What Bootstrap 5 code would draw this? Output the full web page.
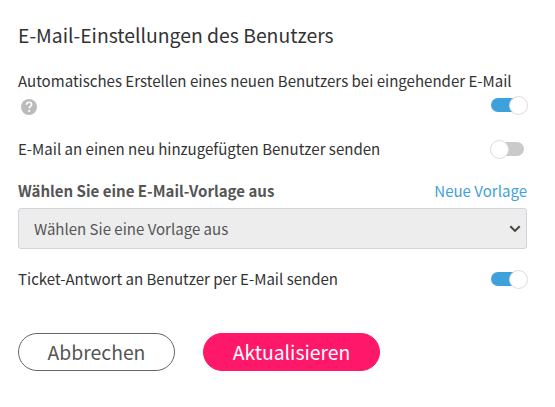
<!DOCTYPE html>
<html lang="de">
<head>
<meta charset="utf-8">
<meta name="viewport" content="width=device-width, initial-scale=1">
<title>E-Mail-Einstellungen des Benutzers</title>
<link href="https://cdn.jsdelivr.net/npm/bootstrap@5.3.0/dist/css/bootstrap.min.css" rel="stylesheet">
<style>
body { font-family: "Noto Sans CJK SC", "Source Sans Pro", sans-serif; font-size: 15.06px; line-height: 24px; color: #333; background: #fff; overflow: hidden; }
.panel { width: 509px; margin-left: 18px; padding-top: 19px; }
.panel-title { font-size: 19.35px; line-height: 32px; margin: 0 0 18px; font-weight: 400; }
.setting { height: 24px; }
.setting-help { height: 24px; margin-top: 1px; }
.setting-send { margin-top: 19px; }
.setting-send label, .setting-reply label { padding-bottom: 1px; }
.setting-template { margin-top: 18px; }
.template-box { margin-top: 5px; }
.setting-reply { margin-top: 18px; }
.actions { margin-top: 42px; gap: 28px; }
.help { width: 16px; height: 16px; margin: 5px 0 0 3px; }
.toggle { appearance: none; position: relative; width: 34px; height: 14px; margin: 0 2px 0 0; border-radius: 7px; background: #cacaca; }
.toggle::before { content: ""; position: absolute; top: -2.5px; left: -1px; width: 19px; height: 19px; border-radius: 50%; background: #fff; border: 1px solid #ddd; }
.toggle:not(:checked) { width: 33px; margin-right: 3px; }
.toggle:checked { background: #3fa1dc; }
.toggle:checked::before { left: 18px; }
.template-label { color: #555; }
.template-link { color: #3fa1dc; }
.template-select { height: 41px; padding: 0 36px 0 15px; font-size: 15.03px; line-height: 39px; color: #555; background-color: #ededed; border: 1px solid #cfd5dc; border-radius: 3px; background-image: none; }
.chevron { right: 6px; top: 17px; width: 12px; height: 8px; }
.action { height: 38px; padding: 0; font-size: 19.35px; line-height: 36px; border-radius: 19px; }
.cancel { width: 157px; border: 1px solid #666; color: #555; }
.update { width: 177px; background: #ff1769; border-color: #ff1769; color: #fff; }
</style>
<script src="https://cdn.jsdelivr.net/npm/bootstrap@5.3.0/dist/js/bootstrap.bundle.min.js"></script>
</head>
<body>
<form class="panel text-nowrap">
  <h1 class="panel-title">E-Mail-Einstellungen des Benutzers</h1>
  <div class="setting"><label for="auto">Automatisches Erstellen eines neuen Benutzers bei eingehender E-Mail</label></div>
  <div class="d-flex justify-content-between align-items-start setting-help">
    <svg class="help" viewBox="0 0 16 16"><circle cx="8" cy="8" r="8" fill="#bbb"/><path d="M5.500 5.800C5.600 4.200 6.600 3.300 8.100 3.300c1.500 0 2.500.9 2.500 2.100 0 1.900-2.400 2-2.400 4.100" fill="none" stroke="#fff" stroke-width="1.600"/><rect x="7.300" y="11" width="1.800" height="1.800" fill="#fff"/></svg>
    <input class="toggle mt-1" type="checkbox" id="auto" checked>
  </div>
  <div class="d-flex justify-content-between align-items-center setting setting-send">
    <label for="send">E-Mail an einen neu hinzugefügten Benutzer senden</label>
    <input class="toggle" type="checkbox" id="send">
  </div>
  <div class="d-flex justify-content-between align-items-center setting setting-template">
    <label class="fw-bold template-label" for="template">Wählen Sie eine E-Mail-Vorlage aus</label>
    <a class="template-link text-decoration-none" href="#">Neue Vorlage</a>
  </div>
  <div class="position-relative template-box">
    <select class="form-select template-select" id="template"><option>Wählen Sie eine Vorlage aus</option></select>
    <svg class="chevron position-absolute" viewBox="0 0 12 8"><path d="M1.300 1.200 6 5.900l4.700-4.700" fill="none" stroke="#444" stroke-width="2"/></svg>
  </div>
  <div class="d-flex justify-content-between align-items-center setting setting-reply">
    <label for="reply">Ticket-Antwort an Benutzer per E-Mail senden</label>
    <input class="toggle" type="checkbox" id="reply" checked>
  </div>
  <div class="d-flex actions">
    <button class="btn action cancel" type="button">Abbrechen</button>
    <button class="btn action update" type="button">Aktualisieren</button>
  </div>
</form>
</body>
</html>
